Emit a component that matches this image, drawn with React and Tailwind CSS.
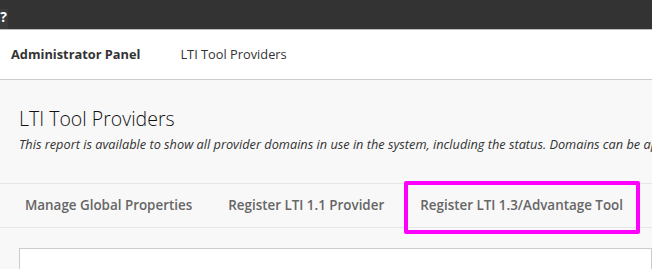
const tabs = ['Manage Global Properties', 'Register LTI 1.1 Provider', 'Register LTI 1.3/Advantage Tool'];

const App = () => {
    return (
        <div className="w-[652px] h-[269px] overflow-hidden bg-[#f8f8f8] text-[#333] font-['Open_Sans',sans-serif]">
            {/* top bar */}
            <div className="h-[30px] bg-[#333] border-b border-[#bdbdbd] flex items-end">
                <div className="w-[8px] h-[20px] bg-[#3b3b3b] overflow-hidden flex items-start justify-end">
                    <span className="text-white text-[14px] font-bold leading-[15px] mr-[1px]">?</span>
                </div>
            </div>

            {/* breadcrumb header */}
            <div className="h-[50px] bg-white border-b border-[#ccc] flex items-center pl-[11px] text-[12.8px] pt-[1px]">
                <span className="font-bold text-[#333]">Administrator Panel</span>
                <span className="ml-[40px] text-[#333]">LTI Tool Providers</span>
            </div>

            <div className="pt-[27px]">
                <h1 className="px-[19px] text-[19.5px] font-light leading-[24px] text-[#111]">LTI Tool Providers</h1>
                <p className="px-[19px] mt-[4px] text-[12.75px] leading-[18px] italic whitespace-nowrap text-[#333]">
                    This report is available to show all provider domains in use in the system, including the status. Domains can be approved or excluded.
                </p>

                <div className="mt-[30px] h-[45px] border-t border-b border-[#e6e6e6] flex items-center pl-[7px] whitespace-nowrap">
                    {tabs.map((t, i) => (
                        <div key={t} className="relative px-[18px] h-full flex items-center text-[13.4px] font-semibold text-[#666]">
                            {t}
                            {i === 2 && (
                                <span className="absolute left-[2px] right-[1px] top-[-3px] bottom-[-7px] border-4 border-[#ff00ff] rounded-[2px]" />
                            )}
                        </div>
                    ))}
                </div>

                <div className="mt-[20px] ml-[19px] h-[40px] bg-white border border-[#ccc]" />
            </div>
        </div>
    );
};

export default App;
